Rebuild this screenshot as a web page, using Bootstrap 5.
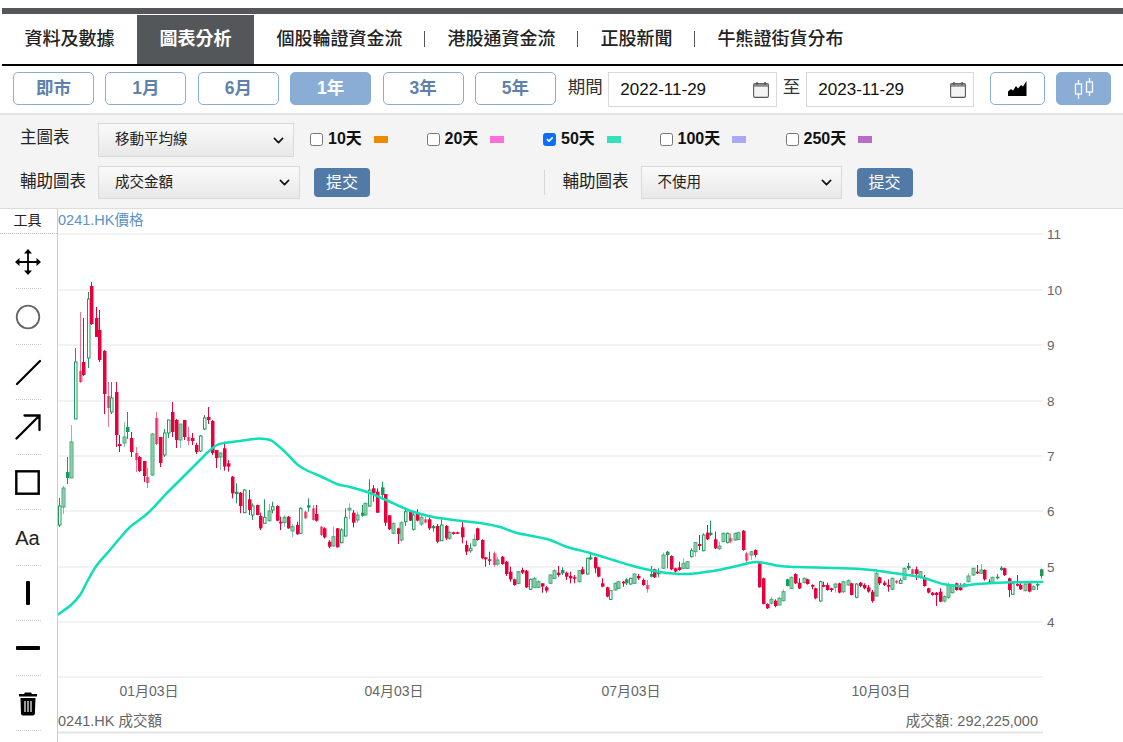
<!DOCTYPE html>
<html lang="zh-Hant">
<head>
<meta charset="utf-8">
<title>圖表分析</title>
<link rel="stylesheet" href="https://cdn.jsdelivr.net/npm/bootstrap@5.3.0/dist/css/bootstrap.min.css">
<style>
html,body{height:742px;overflow:hidden;background:#fff}
body,button,input,select,svg text{font-family:"Liberation Sans","Noto Sans CJK TC",sans-serif}
.topstrip{margin:8px 0 0 2px;height:6px;background:#54575a}
.tabbar{margin-left:2px;height:52px;border-bottom:2px solid #000;padding-top:1px;flex-wrap:nowrap}
.tabbar .nav-link{height:49px;line-height:49px;padding:0 22.5px;font-size:18px;font-weight:500;color:#222;position:relative}
.tabbar .nav-link.active{background:#54575a;color:#fff;font-weight:700}
.tabbar .sepd::after{content:"";position:absolute;right:0;top:16px;height:16px;width:1px;background:#555}
.rangebar{height:47px;padding:6px 0 0 13px}
.rbtn{width:81px;height:33px;padding:0;font-size:17.5px;font-weight:700;color:#5f82aa;background:#fff;border:1px solid #8aadd6;border-radius:5px;margin-right:11.4px}
.rbtn.on,.rbtn.on:hover{background:#8aadd6;color:#fff;border-color:#8aadd6}
.plabel{font-size:17.5px;color:#333;line-height:30px;padding-left:.5px}
.datebox{height:35px;border:1px solid #d9d9d9;background:#fff;padding-right:7px}
.datebox .form-control{border:0;border-radius:0;padding:0 0 0 11px;font-size:17px;color:#111;background:transparent;box-shadow:none}
.dw1{width:169px;margin:0 5px 0 5.5px}
.dw2{width:168px;margin-left:6px}
.ibtn{width:55px;height:33px;padding:0;border:1px solid #8aadd6;border-radius:5px;background:#fff;display:flex;align-items:center;justify-content:center}
.ibtn.on,.ibtn.on:hover{background:#8aadd6;border-color:#8aadd6}
.gapbtn{margin-left:11px}
.optpanel{height:96px;background:#f4f4f4;border-top:2px solid #e3e3e3;border-bottom:1px solid #dcdcdc;padding:8px 0 0 20px}
.optrow{height:43px}
.optname{font-size:16.5px;color:#222;width:78px;flex:none;white-space:nowrap;line-height:28px}
.optname.lift{padding-bottom:4px}
.sel{height:34px;border:1px solid #d9d9d9;border-radius:0;padding:0 0 0 16px;font-size:14.5px;color:#222;
 background-image:url("data:image/svg+xml,%3csvg xmlns='http://www.w3.org/2000/svg' viewBox='0 0 16 16'%3e%3cpath fill='none' stroke='%23111' stroke-linecap='round' stroke-linejoin='round' stroke-width='2.4' d='m2 5 6 6 6-6'/%3e%3c/svg%3e"),linear-gradient(#fafafa,#e8e8e8);
 background-repeat:no-repeat;background-position:right 8px center,0 0;background-size:13px 11px,100% 100%}
.sel.short{height:33px}
.w196{width:196px}.w202{width:202px}.w201{width:201px}
.cklist{margin-left:16px;padding-top:4px}
.ckgroup{width:116.5px;flex:none;display:flex;align-items:center;font-size:16px;font-weight:700;color:#111}
.ckgroup.wide{width:126px}
.ckgroup .form-check-input{width:13px;height:13px;margin:1px 5px 0 0;border-color:#767676;border-radius:2.5px;flex:none}
.ckgroup .form-check-input:checked{background-color:#0d6efd;border-color:#0d6efd}
.swatch{width:14px;height:7px;margin-left:12px;display:block}
.sw10{background:#ee8a00}.sw20{background:#ff6fd8}.sw50{background:#35e0bb}.sw100{background:#a8a8f5}.sw250{background:#b86cc8}
.sendbtn{width:56px;height:29px;padding:0;background:#527aa6;border:0;border-radius:4px;color:#fff;font-size:16px}
.sendbtn:hover{background:#527aa6;color:#fff}
.sb1{margin-left:14px}.sb2{margin-left:15px}
.vsep{width:1px;height:25px;background:#d5d5d5;margin:0 17.5px 0 174px}
.chartwrap{height:533px}
.toolcol{width:58px;flex:none;border-right:1px solid #ccc;height:533px;padding-right:2px}
.toolhead{height:25px;line-height:22px;font-size:14px;text-align:center;color:#222;border-bottom:1px dotted #bbb;margin-right:-2px;padding-right:2px}
.toolcell{height:55.25px;display:flex;align-items:center;justify-content:center;position:relative}
.toolcell::after{content:"";position:absolute;left:16px;right:14px;bottom:0;border-bottom:1px dotted #ccc}
.aatext{font-size:20px;color:#222;line-height:1}
.plot{flex:1;display:block;width:1065px;height:533px}
</style>
</head>
<body>
<div class="topstrip"></div>
<nav class="nav tabbar">
 <a class="nav-link" href="#">資料及數據</a>
 <a class="nav-link active" href="#">圖表分析</a>
 <a class="nav-link sepd" href="#">個股輪證資金流</a>
 <a class="nav-link sepd" href="#">港股通資金流</a>
 <a class="nav-link sepd" href="#">正股新聞</a>
 <a class="nav-link" href="#">牛熊證街貨分布</a>
</nav>
<div class="rangebar d-flex align-items-start">
 <button class="btn rbtn" type="button">即市</button>
 <button class="btn rbtn" type="button">1月</button>
 <button class="btn rbtn" type="button">6月</button>
 <button class="btn rbtn on" type="button">1年</button>
 <button class="btn rbtn" type="button">3年</button>
 <button class="btn rbtn" type="button">5年</button>
 <span class="plabel">期間</span>
 <div class="datebox dw1 d-flex align-items-center">
  <input class="form-control" value="2022-11-29" aria-label="開始日期">
  <svg width="18" height="19" viewBox="0 0 18 19"><rect x=".7" y="2.7" width="16.6" height="15.6" rx="1.5" fill="#f4f4f4" stroke="#555" stroke-width="1.2"/><rect x="1" y="3" width="16" height="3.4" fill="#8a8a8a"/><path d="M4.5 1v3.5M13.5 1v3.5" stroke="#555" stroke-width="1.6"/></svg>
 </div>
 <span class="plabel">至</span>
 <div class="datebox dw2 d-flex align-items-center">
  <input class="form-control" value="2023-11-29" aria-label="結束日期">
  <svg width="18" height="19" viewBox="0 0 18 19"><rect x=".7" y="2.7" width="16.6" height="15.6" rx="1.5" fill="#f4f4f4" stroke="#555" stroke-width="1.2"/><rect x="1" y="3" width="16" height="3.4" fill="#8a8a8a"/><path d="M4.5 1v3.5M13.5 1v3.5" stroke="#555" stroke-width="1.6"/></svg>
 </div>
 <button class="btn ibtn ms-3" type="button" aria-label="面積圖"><svg width="19" height="15" viewBox="0 0 19 15"><path d="M0 15V10.5L3 8l2 1.500L8 5l2 2.500L13 4l2 1.500L18.500 0V15Z" fill="#000"/></svg></button>
 <button class="btn ibtn on gapbtn" type="button" aria-label="陰陽燭圖"><svg width="20" height="22" viewBox="0 0 20 22" fill="none" stroke="#fff" stroke-width="1.300"><rect x="1.500" y="6" width="6" height="10"/><path d="M4.500 2v4M4.500 16v5"/><rect x="12.500" y="4" width="6" height="10"/><path d="M15.500 0v4M15.500 14v4"/></svg></button>
</div>
<div class="optpanel">
 <div class="optrow d-flex align-items-start">
  <span class="optname">主圖表</span>
  <select class="form-select sel w196" aria-label="主圖表"><option>移動平均線</option></select>
  <div class="d-flex cklist">
   <label class="ckgroup"><input class="form-check-input" type="checkbox">10天<i class="swatch sw10"></i></label>
   <label class="ckgroup"><input class="form-check-input" type="checkbox">20天<i class="swatch sw20"></i></label>
   <label class="ckgroup"><input class="form-check-input" type="checkbox" checked>50天<i class="swatch sw50"></i></label>
   <label class="ckgroup wide"><input class="form-check-input" type="checkbox">100天<i class="swatch sw100"></i></label>
   <label class="ckgroup"><input class="form-check-input" type="checkbox">250天<i class="swatch sw250"></i></label>
  </div>
 </div>
 <div class="d-flex align-items-center">
  <span class="optname lift">輔助圖表</span>
  <select class="form-select sel short w202" aria-label="輔助圖表"><option>成交金額</option></select>
  <button class="btn sendbtn sb1" type="button">提交</button>
  <span class="vsep"></span>
  <span class="optname lift">輔助圖表</span>
  <select class="form-select sel short w201" aria-label="輔助圖表二"><option>不使用</option></select>
  <button class="btn sendbtn sb2" type="button">提交</button>
 </div>
</div>
<div class="chartwrap d-flex">
 <div class="toolcol">
  <div class="toolhead">工具</div>
  <div class="toolcell"><svg width="28" height="28" viewBox="0 0 28 28"><path d="M14 2v24M2 14h24" stroke="#000" stroke-width="1.800"/><path d="M14 1l4 4.500h-8zM14 27l4-4.500h-8zM1 14l4.500-4v8zM27 14l-4.500-4v8z" fill="#000"/></svg></div>
  <div class="toolcell"><svg width="26" height="26" viewBox="0 0 26 26"><circle cx="13" cy="13" r="11.300" fill="none" stroke="#666" stroke-width="1.800"/></svg></div>
  <div class="toolcell"><svg width="26" height="26" viewBox="0 0 26 26"><path d="M2 25 25 2" stroke="#000" stroke-width="2.200" stroke-linecap="round"/></svg></div>
  <div class="toolcell"><svg width="26" height="26" viewBox="0 0 26 26"><path d="M1.500 24.500 24 2M9.500 1.500H24.500V16" fill="none" stroke="#000" stroke-width="2.300" stroke-linecap="round"/></svg></div>
  <div class="toolcell"><svg width="25" height="25" viewBox="0 0 25 25"><rect x="1.300" y="1.300" width="22.400" height="22.400" fill="none" stroke="#000" stroke-width="2.400"/></svg></div>
  <div class="toolcell"><span class="aatext">Aa</span></div>
  <div class="toolcell"><svg width="6" height="26" viewBox="0 0 6 26"><rect x="1" y="1" width="4" height="24" rx="1" fill="#000"/></svg></div>
  <div class="toolcell"><svg width="26" height="6" viewBox="0 0 26 6"><rect x="1" y="1" width="24" height="4" rx="1" fill="#000"/></svg></div>
  <div class="toolcell"><svg width="20" height="25" viewBox="0 0 20 25"><path d="M7 1.500h6l1 1.500h5v2.500H1V3h5z" fill="#000"/><path d="M2.500 7h15l-.6 15.500a2 2 0 0 1-2 2H5a2 2 0 0 1-2-2z" fill="#000"/><path d="M7 10v11M10 10v11M13 10v11" stroke="#fff" stroke-width="1.200"/></svg></div>
 </div>
 <svg class="plot" id="plot" viewBox="58 209 1065 533" xmlns="http://www.w3.org/2000/svg"></svg>
</div>
<script src="https://cdn.jsdelivr.net/npm/bootstrap@5.3.0/dist/js/bootstrap.bundle.min.js"></script>
<script>
(function(){
var RED='#e6003c',GRN='#1c9a5c',out=[];
function add(s){out.push(s)}
[234,290,345,401,456,511,567,622,677].forEach(function(y){add('<line x1="58" x2="1043" y1="'+y+'" y2="'+y+'" stroke="#e6e6e6" stroke-width="1.200"/>')});
add('<line x1="58" x2="1043" y1="732.500" y2="732.500" stroke="#e4e4e4" stroke-width="2"/>');
var first=[[59,'g',506,525,498,527],[62.500,'G',488,507,486,514],[67,'D',472,478,457,484],[71,'G',442,478,425,478],[75,'g',362,419,348,419],[80,'R',371,382,312,383],[83,'r',362,375,318,376],[88,'g',299,358,292,368],[91,'r',286,324,282,325],[95.500,'r',318,337,307,337],[99,'r',330,360,310,362],[103.500,'r',351,394,350,414],[108,'R',396,408,382,427],[111,'g',398,412,382,414],[115.500,'r',392,435,382,447],[119,'r',444,446,435,452],[123.500,'G',437,443,422,447],[127,'D',427,432,412,439],[131,'r',438,452,432,457],[135.500,'R',453,460,447,472],[139,'r',457,471,456,472],[144,'r',461,476,461,482],[147,'R',477,483,468,488],[152,'G',434,475,433,476],[156,'R',418,444,412,445],[160,'r',437,463,437,467],[164,'g',433,455,429,457],[167.500,'g',420,433,420,438],[172,'r',412,432,402,437],[175.500,'r',420,440,419,448],[180,'G',424,440,424,448],[184,'r',420,437,420,440],[188,'R',437,441,427,445],[192,'r',438,441,433,445],[196,'r',445,452,443,454],[200,'g',436,451,435,452],[204,'g',418,429,415,430],[208,'r',417,420,407,424],[212,'r',421,453,420,455],[216,'r',450,458,450,468],[220,'G',453,457,452,470]];
var z5=[[13,'r',145,200,125,212],[25,'r',190,200,180,215],[37,'r',230,280,228,295],[49,'D',275,282,250,310],[60,'r',278,318,276,340],[73,'g',270,338,268,339],[86,'r',298,330,270,345],[96,'g',318,345,310,360],[110,'r',315,345,314,346],[121,'r',348,385,338,390],[133,'g',352,370,298,371],[146,'G',333,362,312,365],[157,'g',320,330,305,340],[170,'r',318,362,316,364],[181,'r',365,370,350,390],[193,'G',352,368,345,380],[205,'r',350,385,348,386],[217,'G',380,393,372,412],[232,'r',375,403,365,404],[241,'g',325,400,322,402],[254,'R',335,355,332,356],[265,'D',316,323,295,335],[279,'R',325,360,316,362],[289,'r',342,362,315,365],[303,'R',380,405,378,408],[313,'r',385,412,382,416],[326,'r',425,440,420,445],[339,'G',410,438,380,440],[350,'r',385,442,384,443],[363,'g',390,428,385,430],[374,'g',352,408,325,410],[387,'G',325,330,310,358],[400,'r',338,368,330,382],[411,'G',345,360,335,368],[425,'D',338,347,315,350],[435,'G',310,345,308,346],[448,'g',270,318,238,320],[458,'r',265,280,255,305],[472,'r',275,338,265,339],[485,'D',262,285,245,295],[495,'r',282,368,282,378],[508,'r',346,388,345,390],[520,'G',370,400,368,402],[533,'r',385,402,383,432],[543,'G',368,420,362,425],[556,'g',335,365,330,378],[569,'r',335,362,333,363],[580,'g',345,388,340,392],[592,'r',340,362,328,364],[604,'G',352,372,345,378],[616,'R',358,368,350,370],[628,'r',358,385,352,390],[640,'D',378,385,375,395],[651,'r',378,425,372,430],[664,'g',375,422,358,423],[677,'r',378,415,375,420],[688,'G',397,415,392,420],[700,'r',397,402,395,404],[712,'r',397,400,395,402],[725,'r',382,412,365,430],[738,'r',435,455,422,465],[749,'g',445,452,430,458],[761,'G',418,437,402,440],[772,'r',385,420,383,422]];
var z6=[[5,'r',120,175,118,178],[16,'r',172,178,172,200],[28,'r',178,182,155,195],[41,'R',160,195,155,200],[52,'G',180,192,170,198],[65,'r',170,192,168,194],[77,'r',185,222,183,228],[90,'r',215,238,200,245],[101,'r',238,255,236,257],[113,'G',215,250,213,252],[127,'r',210,218,203,222],[138,'r',212,262,210,264],[151,'g',238,268,236,270],[163,'G',235,262,230,264],[175,'G',245,262,240,264],[186,'r',250,260,250,278],[198,'r',262,272,258,278],[211,'G',225,250,223,252],[222,'G',212,235,208,237],[235,'r',218,225,198,230],[246,'D',210,220,202,225],[259,'r',218,230,215,240],[270,'r',228,235,215,250],[283,'r',232,235,225,250],[296,'G',212,245,210,247],[307,'r',208,222,200,224],[320,'g',175,222,173,224],[331,'D',172,178,155,180],[344,'r',172,205,170,220],[354,'r',202,230,200,232],[367,'r',250,260,235,262],[380,'r',262,290,260,292],[391,'g',272,298,270,300],[404,'G',250,270,248,272],[415,'G',245,265,243,267],[428,'r',245,250,243,260],[439,'D',238,250,235,255],[451,'g',235,252,233,254],[463,'G',222,250,220,252],[475,'r',228,235,222,240],[488,'r',240,255,235,257],[500,'R',255,268,240,278],[512,'D',222,230,198,232],[522,'r',208,232,206,234],[535,'D',218,222,205,232],[548,'G',165,205,158,207],[560,'D',155,165,153,205],[574,'r',168,208,166,210],[585,'r',205,215,203,217],[597,'r',202,210,185,212],[608,'G',190,205,175,207],[620,'G',185,205,183,207],[634,'g',152,170,145,172],[644,'G',128,155,126,170],[657,'r',132,138,105,150],[668,'g',105,152,100,154],[681,'r',98,118,75,120],[691,'D',98,105,62,108],[704,'r',118,145,95,147],[718,'G',138,146,125,150],[729,'G',100,125,98,127],[741,'g',100,128,98,130],[751,'R',115,125,100,130],[764,'G',100,120,98,122],[775,'G',98,118,96,120],[789,'r',92,150,90,152],[799,'R',160,182,155,190],[813,'G',155,165,153,180],[826,'r',150,165,148,172],[837,'r',190,262,185,263]];
var z7=[[10,'r',115,192,113,193],[20,'r',192,205,190,207],[33,'G',178,190,172,193],[46,'r',182,198,178,202],[58,'G',175,195,170,196],[70,'G',155,182,148,184],[82,'D',118,138,116,139],[94,'G',112,145,110,146],[105,'r',102,130,100,132],[118,'r',128,145,115,147],[131,'G',115,128,112,130],[142,'r',118,132,116,134],[155,'r',135,140,133,148],[166,'r',145,175,143,178],[179,'g',125,183,122,185],[190,'r',135,140,125,142],[202,'r',135,150,128,152],[214,'r',145,150,143,156],[226,'G',132,142,128,158],[238,'r',130,158,128,160],[250,'G',125,155,122,160],[263,'G',122,135,118,137],[274,'r',130,165,128,166],[287,'g',132,172,130,175],[300,'r',128,138,126,142],[312,'r',135,145,130,148],[324,'r',142,155,135,158],[335,'r',155,183,150,188],[348,'G',100,168,88,170],[358,'r',112,130,110,135],[372,'r',128,135,122,138],[384,'r',135,140,118,155],[395,'G',115,148,112,150],[408,'R',122,128,120,132],[420,'g',122,130,115,132],[432,'G',85,118,83,120],[443,'D',78,85,68,90],[456,'R',88,102,86,104],[468,'r',88,102,80,120],[480,'G',95,110,93,116],[492,'r',112,138,105,140],[504,'r',145,158,143,160],[516,'r',158,165,156,167],[528,'r',158,165,156,198],[540,'r',155,185,145,187],[551,'G',170,183,166,188],[563,'G',135,172,128,178],[575,'G',135,158,133,160],[587,'r',130,150,128,152],[600,'r',142,150,130,152],[612,'G',132,140,128,142],[625,'G',108,125,100,127],[638,'G',85,105,83,107],[650,'r',95,100,75,102],[662,'G',90,100,72,102],[673,'r',90,118,88,122],[686,'r',125,130,118,132],[696,'G',112,128,110,130],[710,'D',110,115,102,118],[722,'D',83,90,78,92],[733,'r',85,105,83,108],[746,'r',115,150,113,172],[757,'g',130,163,128,165],[770,'r',132,137,105,139],[781,'r',135,148,128,150],[794,'G',132,152,130,154],[807,'r',130,155,128,157],[818,'G',140,148,136,150],[831,'D',132,136,130,150],[842,'D',88,108,86,115]];
function conv(list,ox,oy){return list.map(function(c){return [ox+c[0]/3,c[1],oy+c[2]/3,oy+c[3]/3,oy+c[4]/3,oy+c[5]/3]})}
var all=first.concat(conv(z5,220,400),conv(z6,480,500),conv(z7,760,540));
all.forEach(function(c){
 var x=Math.round(c[0])+.5,t=c[1],bt=c[2],bb=c[3],wt=c[4],wb=c[5];
 var pale=(t==='R'||t==='G');
 var col=(t==='r'||t==='R')?RED:GRN;
 var op=pale?' opacity=".55"':'';
 add('<line x1="'+x+'" x2="'+x+'" y1="'+wt.toFixed(1)+'" y2="'+wb.toFixed(1)+'" stroke="'+col+'" stroke-width="1"'+op+'/>');
 if(t==='G'){add('<rect x="'+(x-1.5)+'" y="'+bt.toFixed(1)+'" width="3" height="'+(bb-bt).toFixed(1)+'" fill="#8fcfad" stroke="#1c9a5c" stroke-width="1" opacity=".8"/>');return}
 if(t==='g'){add('<rect x="'+(x-1)+'" y="'+bt.toFixed(1)+'" width="2.500" height="'+(bb-bt).toFixed(1)+'" fill="#fff" stroke="'+GRN+'" stroke-width="1"/>');return}
 add('<rect x="'+(x-1.5)+'" y="'+bt.toFixed(1)+'" width="3.500" height="'+Math.max(bb-bt,1.5).toFixed(1)+'" fill="'+col+'"'+op+'/>');
});
var ma=[[58,614.500],[71,605],[80,595],[88,580],[97,565],[110,550],[120,538],[130,527],[148,513],[165,495],[180,480],[190,470],[200,460],[208,452],[216,445.500],[224,443],[240,441],[256.700,438.700],[265,439],[271.700,440.700],[283,450],[290,457],[298,465],[308,471],[320,476],[336.700,484],[350,487],[370,493],[386,500],[410,510.700],[433,517],[460,520.700],[480,523],[500,527],[517,533],[547,539],[567,547],[590,553],[613,560],[633,566],[660,572],[687,574],[713,571],[737,566],[757,562],[780,566],[797,567],[860,569],[893,573],[920,577],[943,584],[960,586],[977,584],[1010,582.300],[1042,582]];
var d='M'+ma[0].join(' ');
for(var i=0;i<ma.length-1;i++){
 var p0=ma[Math.max(i-1,0)],p1=ma[i],p2=ma[i+1],p3=ma[Math.min(i+2,ma.length-1)];
 d+=' C'+(p1[0]+(p2[0]-p0[0])/6).toFixed(1)+' '+(p1[1]+(p2[1]-p0[1])/6).toFixed(1)+' '+(p2[0]-(p3[0]-p1[0])/6).toFixed(1)+' '+(p2[1]-(p3[1]-p1[1])/6).toFixed(1)+' '+p2[0]+' '+p2[1];
}
add('<path fill="none" stroke="#0edfb7" stroke-width="2.500" stroke-linecap="round" d="'+d+'"/>');
function txt(x,y,s,col,anchor,size){add('<text x="'+x+'" y="'+y+'" fill="'+col+'" font-size="'+(size||14)+'"'+(anchor?' text-anchor="'+anchor+'"':'')+'>'+s+'</text>')}
[[11,234],[10,290],[9,345],[8,401],[7,456],[6,511],[5,567],[4,622]].forEach(function(a){txt(1047,a[1]+5,a[0],'#666',null,13.500)});
txt(58,225,'0241.HK價格','#5b93c7',null,14.5);
[['01月03日',149],['04月03日',394],['07月03日',631],['10月03日',881]].forEach(function(a){txt(a[1],696,a[0],'#666','middle')});
txt(58,726,'0241.HK 成交額','#666',null,14.5);
txt(1038,726,'成交額: 292,225,000','#666','end',14.5);
document.getElementById('plot').innerHTML=out.join('');
})();
</script>
</body>
</html>
